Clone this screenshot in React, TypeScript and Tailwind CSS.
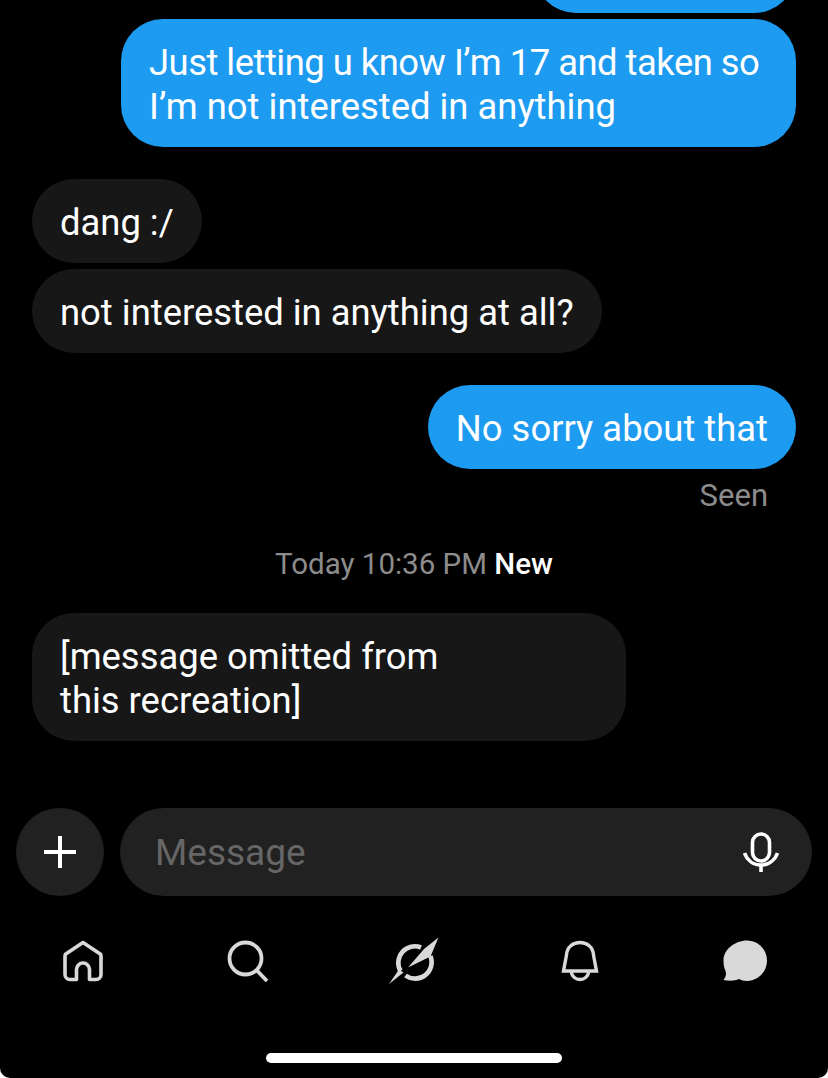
const font = "font-['Roboto',sans-serif]";

const Bubble = ({ mine, className = "", children }: { mine?: boolean; className?: string; children: React.ReactNode }) => (
  <div
    className={`rounded-[42px] px-[28px] pb-[18px] pt-[22px] text-[36.4px] leading-[44px] text-white ${
      mine ? "self-end bg-[#1d9bf0]" : "self-start bg-[#171717]"
    } ${className}`}
  >
    {children}
  </div>
);

const HomeIcon = () => (
  <svg width="42" height="42" viewBox="0 0 42 42" fill="none" stroke="#d9d9d9" strokeWidth="3.6" strokeLinejoin="round" strokeLinecap="round">
    <path d="M21 2.5 L37.5 13.5 a2.5 2.5 0 0 1 1.5 2.3 V34.5 a5 5 0 0 1 -5 5 H27.5 V29.5 a6.5 6.5 0 0 0 -13 0 V39.5 H8 A5 5 0 0 1 3 34.5 V15.8 a2.5 2.5 0 0 1 1.5 -2.3 Z" />
  </svg>
);

const SearchIcon = () => (
  <svg width="42" height="42" viewBox="0 0 42 42" fill="none" stroke="#d9d9d9" strokeWidth="3.8">
    <circle cx="18.5" cy="18.5" r="16" />
    <path d="M29.5 30 L40 41" />
  </svg>
);

const SlashIcon = () => (
  <svg width="50" height="48" viewBox="0 0 50 48" fill="none">
    <path d="M32 10.5 A16.5 16.5 0 0 0 11.5 34" stroke="#d9d9d9" strokeWidth="4.6" />
    <path d="M41.5 19 A16.5 16.5 0 0 1 16.5 38.5" stroke="#d9d9d9" strokeWidth="4.6" />
    <path d="M49.5 0.5 L41.5 19.5 L19 30.5 L35 12 Z" fill="#d9d9d9" />
    <path d="M0 47 L10 32.5 L14.5 35.5 Z" fill="#d9d9d9" />
  </svg>
);

const BellIcon = () => (
  <svg width="38" height="42" viewBox="0 0 38 42" fill="none" stroke="#d9d9d9" strokeWidth="3.4" strokeLinejoin="miter">
    <path d="M2.5 31 L5.5 15 C6 7 12 2.5 19 2.5 C26 2.5 32 7 32.5 15 L35.5 31 Z" />
    <path d="M10 31 C11 37 15 39.5 19 39.5 C23 39.5 27 37 28 31" />
  </svg>
);

const ChatIcon = () => (
  <svg width="44" height="42" viewBox="0 0 44 42" fill="#d9d9d9">
    <path d="M24 0.5 C35 0.5 44 9.5 44 20.5 C44 32 35 41 24 41 C20.5 41 18.5 40 16 39 C12 41 6 41 0.5 40 C3 37 3.5 34 2.5 31 C1 28 0.5 24 0.5 20.5 C0.5 9.5 12 0.5 24 0.5 Z" />
  </svg>
);

const MicIcon = () => (
  <svg width="36" height="40" viewBox="0 0 36 40" fill="none" stroke="#fff" strokeWidth="3.6">
    <rect x="9.5" y="2" width="17" height="27" rx="8.5" />
    <path d="M1.5 21 C4 28 10 33 18 33 C26 33 32 28 34.5 21" />
    <path d="M18 33 V40" />
  </svg>
);

const PlusIcon = () => (
  <svg width="32" height="32" viewBox="0 0 32 32" stroke="#fff" strokeWidth="4">
    <path d="M16 0 V32 M0 16 H32" />
  </svg>
);

export default function App() {
  return (
    <div className={`flex h-[1078px] w-[828px] flex-col overflow-hidden rounded-b-[10px] bg-black ${font}`}>
      <div className="flex h-[13px] items-end justify-end overflow-hidden pr-[32px]">
        <div className="h-[84px] w-[262px] shrink-0 rounded-[42px] bg-[#1d9bf0]" />
      </div>

      <div className="flex flex-col px-[32px] pt-[6px]">
        <Bubble mine className="w-[675px]">
          <span className="tracking-[-0.5px]">Just letting u know I’m 17 and taken so</span>
          <br />
          I’m not interested in anything
        </Bubble>
        <Bubble className="mt-[32px]">dang :/</Bubble>
        <Bubble className="mt-[6px]">not interested in anything at all?</Bubble>
        <Bubble mine className="mt-[32px]">No sorry about that</Bubble>
        <div className="mt-[9px] self-end pr-[28px] text-[31px] leading-[36px] text-[#8c8c8c]">Seen</div>
        <div className="mt-[32px] self-center text-[29.5px] leading-[36px] text-[#8c8c8c]">
          Today 10:36 PM <span className="font-medium text-white">New</span>
        </div>
        <Bubble className="mt-[31px] w-[594px]">
          [message omitted from
          <br />
          this recreation]
        </Bubble>
      </div>

      <div className="mt-[67px] flex gap-[16px] pl-[16px] pr-[16px]">
        <button className="flex h-[88px] w-[88px] items-center justify-center rounded-full bg-[#212121]">
          <PlusIcon />
        </button>
        <div className="flex h-[88px] flex-1 items-center justify-between rounded-full bg-[#212121] pl-[35px] pr-[33px]">
          <span className="pt-[2px] text-[37px] text-[#666666]">Message</span>
          <MicIcon />
        </div>
      </div>

      <div className="mt-[41px] grid h-[48px] grid-cols-5 items-center justify-items-center">
        <HomeIcon />
        <SearchIcon />
        <SlashIcon />
        <BellIcon />
        <ChatIcon />
      </div>

      <div className="mt-[68px] flex justify-center">
        <div className="h-[10px] w-[296px] rounded-full bg-white" />
      </div>
    </div>
  );
}
